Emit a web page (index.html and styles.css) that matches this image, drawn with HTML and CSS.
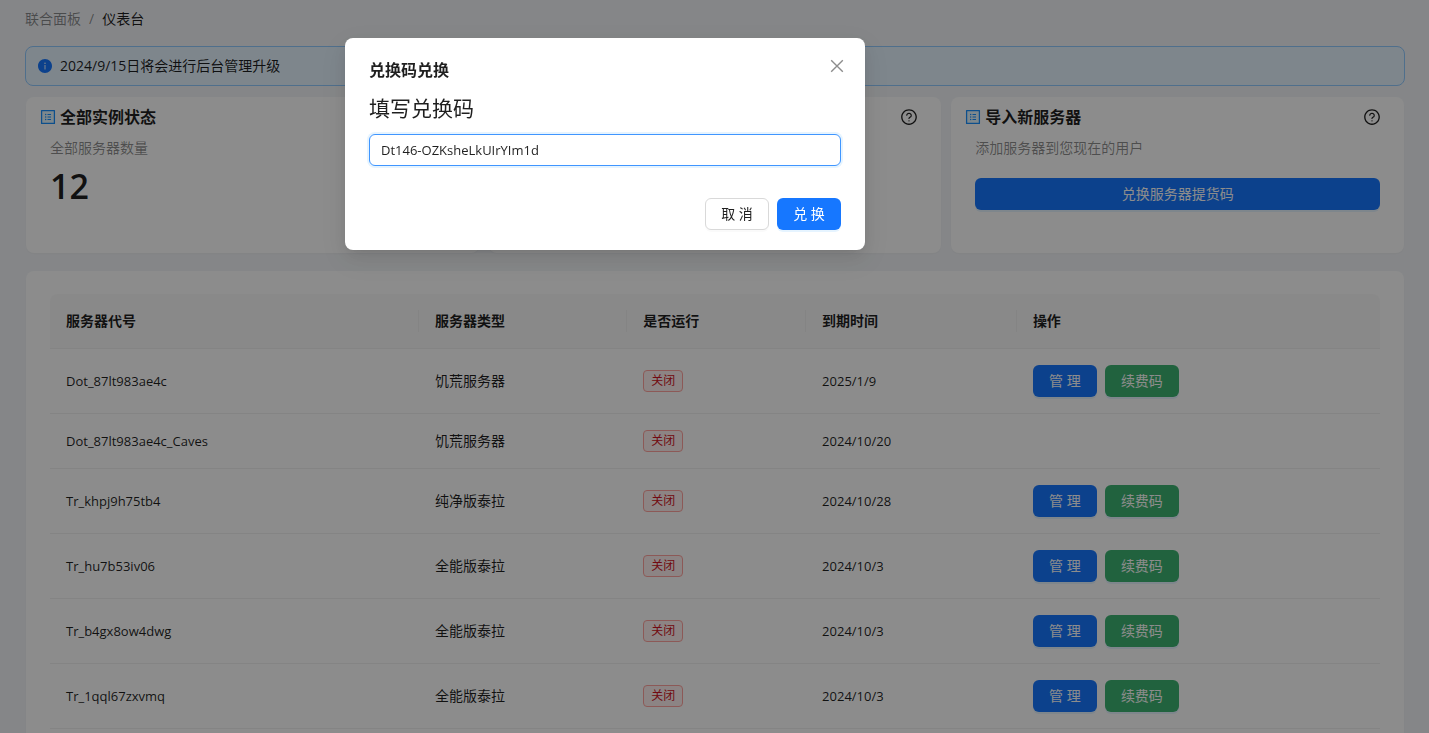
FILE: index.html
```html
<!DOCTYPE html>
<html lang="zh-CN">
<head>
<meta charset="utf-8">
<meta name="viewport" content="width=device-width, initial-scale=1">
<title>仪表台</title>
<link rel="stylesheet" href="styles.css">
</head>
<body>
<svg class="sprite" aria-hidden="true">
  <symbol id="i-profile" viewBox="0 0 1024 1024">
    <path fill="#e6f7ff" d="M184 184h656v656H184z"/>
    <path fill="#1890ff" d="M880 112H144c-17.7 0-32 14.3-32 32v736c0 17.7 14.3 32 32 32h736c17.7 0 32-14.3 32-32V144c0-17.7-14.3-32-32-32zm-40 728H184V184h656v656zM492 400h184c4.400 0 8-3.600 8-8v-48c0-4.400-3.600-8-8-8H492c-4.400 0-8 3.600-8 8v48c0 4.400 3.600 8 8 8zm0 144h184c4.400 0 8-3.600 8-8v-48c0-4.400-3.600-8-8-8H492c-4.400 0-8 3.600-8 8v48c0 4.400 3.600 8 8 8zm0 144h184c4.400 0 8-3.600 8-8v-48c0-4.400-3.600-8-8-8H492c-4.400 0-8 3.600-8 8v48c0 4.400 3.600 8 8 8zM340 368a40 40 0 1 0 80 0 40 40 0 1 0-80 0zm0 144a40 40 0 1 0 80 0 40 40 0 1 0-80 0zm0 144a40 40 0 1 0 80 0 40 40 0 1 0-80 0z"/>
  </symbol>
  <symbol id="i-question" viewBox="0 0 1024 1024">
    <path fill="currentColor" d="M512 64C264.600 64 64 264.600 64 512s200.600 448 448 448 448-200.600 448-448S759.400 64 512 64zm0 820c-205.400 0-372-166.600-372-372s166.600-372 372-372 372 166.600 372 372-166.600 372-372 372z"/>
    <path fill="currentColor" d="M623.600 316.700C593.600 290.400 554 276 512 276s-81.600 14.500-111.600 40.700C369.200 344 352 380.700 352 420v7.600c0 4.400 3.600 8 8 8h48c4.400 0 8-3.600 8-8V420c0-44.100 43.100-80 96-80s96 35.900 96 80c0 31.100-22 59.600-56.100 72.700-21.200 8.100-39.200 22.300-52.100 40.900-13.100 19-19.900 41.800-19.900 64.900V620c0 4.400 3.600 8 8 8h48c4.400 0 8-3.600 8-8v-22.700a48.300 48.300 0 0 1 30.900-44.800c59-22.700 97.100-74.700 97.100-132.500.1-39.300-17.100-76-48.300-103.300zM472 732a40 40 0 1 0 80 0 40 40 0 1 0-80 0z"/>
  </symbol>
</svg>

<main class="page">
  <nav class="breadcrumb" aria-label="导航">
    <a class="crumb" href="#">联合面板</a>
    <span class="crumb-sep">/</span>
    <span class="crumb-current">仪表台</span>
  </nav>

  <div class="alert" role="status">
    <svg class="alert-icon" viewBox="0 0 1024 1024" aria-hidden="true"><path fill="currentColor" d="M512 64C264.600 64 64 264.600 64 512s200.600 448 448 448 448-200.600 448-448S759.400 64 512 64zm32 664c0 4.400-3.600 8-8 8h-48c-4.400 0-8-3.600-8-8V456c0-4.400 3.600-8 8-8h48c4.400 0 8 3.600 8 8v272zm-32-344a48 48 0 0 1 0-96 48 48 0 0 1 0 96z"/></svg>
    <span>2024/9/15日将会进行后台管理升级</span>
  </div>

  <div class="cards">
    <section class="card">
      <header class="card-head">
        <svg class="icon" aria-hidden="true"><use href="#i-profile"/></svg>
        <h2 class="card-title">全部实例状态</h2>
      </header>
      <div class="card-body">
        <p class="card-desc">全部服务器数量</p>
        <p class="card-value">12</p>
      </div>
    </section>
    <section class="card">
      <header class="card-head">
        <svg class="icon help" aria-hidden="true"><use href="#i-question"/></svg>
      </header>
    </section>
    <section class="card">
      <header class="card-head">
        <svg class="icon" aria-hidden="true"><use href="#i-profile"/></svg>
        <h2 class="card-title">导入新服务器</h2>
        <svg class="icon help" aria-hidden="true"><use href="#i-question"/></svg>
      </header>
      <div class="card-body">
        <p class="card-desc">添加服务器到您现在的用户</p>
        <button class="btn btn-primary btn-block" type="button">兑换服务器提货码</button>
      </div>
    </section>
  </div>

  <section class="panel">
    <table class="table">
      <colgroup><col class="c-code"><col class="c-type"><col class="c-run"><col class="c-date"><col></colgroup>
      <thead>
        <tr><th scope="col">服务器代号</th><th scope="col">服务器类型</th><th scope="col">是否运行</th><th scope="col">到期时间</th><th scope="col">操作</th></tr>
      </thead>
      <tbody>
        <tr><td class="latin">Dot_87lt983ae4c</td><td>饥荒服务器</td><td><span class="tag">关闭</span></td><td class="latin">2025/1/9</td><td><div class="actions"><button class="btn btn-primary" type="button">管 理</button><button class="btn btn-green" type="button">续费码</button></div></td></tr>
        <tr><td class="latin">Dot_87lt983ae4c_Caves</td><td>饥荒服务器</td><td><span class="tag">关闭</span></td><td class="latin">2024/10/20</td><td></td></tr>
        <tr><td class="latin">Tr_khpj9h75tb4</td><td>纯净版泰拉</td><td><span class="tag">关闭</span></td><td class="latin">2024/10/28</td><td><div class="actions"><button class="btn btn-primary" type="button">管 理</button><button class="btn btn-green" type="button">续费码</button></div></td></tr>
        <tr><td class="latin">Tr_hu7b53iv06</td><td>全能版泰拉</td><td><span class="tag">关闭</span></td><td class="latin">2024/10/3</td><td><div class="actions"><button class="btn btn-primary" type="button">管 理</button><button class="btn btn-green" type="button">续费码</button></div></td></tr>
        <tr><td class="latin">Tr_b4gx8ow4dwg</td><td>全能版泰拉</td><td><span class="tag">关闭</span></td><td class="latin">2024/10/3</td><td><div class="actions"><button class="btn btn-primary" type="button">管 理</button><button class="btn btn-green" type="button">续费码</button></div></td></tr>
        <tr><td class="latin">Tr_1qql67zxvmq</td><td>全能版泰拉</td><td><span class="tag">关闭</span></td><td class="latin">2024/10/3</td><td><div class="actions"><button class="btn btn-primary" type="button">管 理</button><button class="btn btn-green" type="button">续费码</button></div></td></tr>
      </tbody>
    </table>
  </section>
</main>

<div class="mask">
  <form class="modal" role="dialog" aria-modal="true" aria-labelledby="modal-title">
    <header class="modal-head">
      <h2 class="modal-title" id="modal-title">兑换码兑换</h2>
      <button class="modal-close" type="button" aria-label="关闭">
        <svg class="close-icon" viewBox="0 0 16 16" aria-hidden="true"><path d="M2.200 2.200l11.600 11.600M13.800 2.200L2.200 13.800" fill="none" stroke="currentColor" stroke-width="1.400"/></svg>
      </button>
    </header>
    <label class="modal-label" for="code">填写兑换码</label>
    <input class="input" id="code" type="text" value="Dt146-OZKsheLkUIrYIm1d">
    <footer class="modal-foot">
      <button class="btn btn-default" type="button">取 消</button>
      <button class="btn btn-primary" type="button">兑 换</button>
    </footer>
  </form>
</div>
</body>
</html>
```
FILE: styles.css
```css
* {
  box-sizing: border-box;
}

body {
  margin: 0;
  height: 100vh;
  overflow: hidden;
  background: #f3f5f8;
  color: rgba(0, 0, 0, 0.88);
  font: 14px/22px "Open Sans", "Noto Sans CJK SC", sans-serif;
}

h2,
p {
  margin: 0;
}

.sprite {
  display: none;
}

.page {
  height: 100%;
  overflow: hidden;
  padding: 8px 24px 0 25px;
}

.breadcrumb {
  display: flex;
  gap: 8px;
  margin-bottom: 16px;
}

.crumb,
.crumb-sep {
  color: rgba(0, 0, 0, 0.45);
  text-decoration: none;
}

.alert {
  display: flex;
  align-items: center;
  gap: 7px;
  min-height: 40px;
  padding: 8px 11px;
  border: 1px solid #91caff;
  border-radius: 8px;
  background: #e6f4ff;
}

.alert-icon {
  width: 16px;
  height: 16px;
  color: #1677ff;
}

.cards {
  display: grid;
  grid-template-columns: repeat(3, 1fr);
  gap: 10px;
  margin: 11px 1px 18px;
}

.card,
.panel {
  border-radius: 8px;
  background: #fff;
  box-shadow: 0 1px 2px rgba(0, 0, 0, 0.03);
}

.card {
  min-height: 156px;
}

.card-head {
  display: flex;
  align-items: center;
  gap: 3px;
  height: 40px;
  padding: 0 23px 0 13px;
}

.card-title {
  font-size: 16px;
  line-height: 24px;
  font-weight: 700;
}

.icon {
  width: 18px;
  height: 18px;
  flex: none;
}

.help {
  margin-left: auto;
}

.card-body {
  padding: 0 24px 24px 24px;
}

.card-desc {
  color: rgba(0, 0, 0, 0.45);
}

.card-value {
  margin-top: 8px;
  font-size: 34px;
  line-height: 38px;
  font-weight: 600;
}

.btn {
  height: 32px;
  padding: 0 15px;
  border: 1px solid transparent;
  border-radius: 6px;
  font: inherit;
  color: #fff;
  white-space: nowrap;
  cursor: pointer;
}

.btn-primary {
  background: #1677ff;
  box-shadow: 0 2px 0 rgba(5, 145, 255, 0.1);
}

.btn-green {
  background: #3cb371;
  box-shadow: 0 2px 0 rgba(5, 145, 255, 0.1);
}

.btn-default {
  border-color: #d9d9d9;
  background: #fff;
  color: rgba(0, 0, 0, 0.88);
  box-shadow: 0 2px 0 rgba(0, 0, 0, 0.02);
}

.btn-block {
  width: 100%;
  margin-top: 19px;
}

.panel {
  margin: 0 1px;
  padding: 23px 24px 24px;
}

.table {
  width: 100%;
  table-layout: fixed;
  border-collapse: separate;
  border-spacing: 0;
}

.c-code {
  width: 27.75%;
}

.c-type {
  width: 15.65%;
}

.c-run {
  width: 13.45%;
}

.c-date {
  width: 15.85%;
}

.table th,
.table td {
  height: 55px;
  padding: 16px;
  border-bottom: 1px solid #f0f0f0;
  text-align: left;
}

.table th {
  background:
    linear-gradient(#f0f0f0, #f0f0f0) right center / 1px 22px no-repeat,
    #fafafa;
  font-weight: 600;
}

.table th:first-child {
  border-top-left-radius: 8px;
}

.table th:last-child {
  border-top-right-radius: 8px;
  background: #fafafa;
}

.latin {
  font-size: 13px;
}

.tag {
  display: block;
  width: max-content;
  padding: 0 7px;
  border: 1px solid #ffa39e;
  border-radius: 4px;
  background: #fff1f0;
  color: #cf1322;
  font-size: 12px;
  line-height: 20px;
}

.actions {
  display: flex;
  gap: 8px;
}

.actions .btn,
.modal-foot .btn {
  min-width: 64px;
}

.mask {
  position: fixed;
  inset: 0;
  display: flex;
  justify-content: center;
  align-items: flex-start;
  padding: 38px 219px 0 0;
  background: rgba(0, 0, 0, 0.45);
}

.modal {
  width: 520px;
  padding: 20px 24px;
  border-radius: 8px;
  background: #fff;
  box-shadow:
    0 6px 16px rgba(0, 0, 0, 0.08),
    0 3px 6px -4px rgba(0, 0, 0, 0.12),
    0 9px 28px 8px rgba(0, 0, 0, 0.05);
}

.modal-head {
  display: flex;
  justify-content: space-between;
  margin-bottom: 8px;
}

.modal-title {
  font-size: 16px;
  line-height: 24px;
  font-weight: 600;
}

.modal-close {
  display: flex;
  align-items: center;
  justify-content: center;
  width: 22px;
  height: 22px;
  margin: -3px -7px 0 0;
  padding: 0;
  border: 0;
  background: none;
  color: rgba(0, 0, 0, 0.45);
  cursor: pointer;
}

.close-icon {
  width: 16px;
  height: 16px;
}

.modal-label {
  display: block;
  margin-bottom: 8px;
  font-size: 21px;
  line-height: 36px;
}

.input {
  display: block;
  width: 100%;
  height: 32px;
  padding: 4px 11px;
  border: 1px solid #4096ff;
  border-radius: 6px;
  outline: 0;
  background: #fff;
  color: rgba(0, 0, 0, 0.88);
  font: inherit;
  font-size: 13px;
  box-shadow: 0 0 0 2px rgba(5, 145, 255, 0.1);
}

.modal-foot {
  display: flex;
  justify-content: flex-end;
  gap: 8px;
  margin-top: 32px;
}
```
